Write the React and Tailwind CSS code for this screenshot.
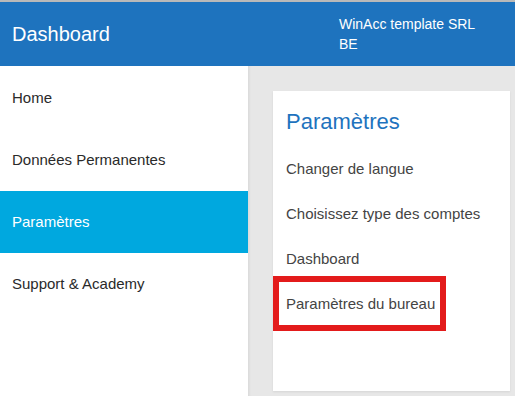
const NAV = ['Home', 'Données Permanentes', 'Paramètres', 'Support & Academy'];

const SETTINGS = ['Changer de langue', 'Choisissez type des comptes', 'Dashboard', 'Paramètres du bureau'];

export default function App() {
  return (
    <div className="flex h-[396px] w-full flex-col overflow-hidden bg-white font-['Liberation_Sans',Arial,sans-serif]">
      <div className="h-[2px] bg-[#b9b9b9]" />
      <header className="flex h-[64px] items-center bg-[#1e73be] text-white">
        <div className="w-[339px] pl-3 text-[20px]">Dashboard</div>
        <div className="text-[14px] leading-[20px]">
          WinAcc template SRL
          <br />
          BE
        </div>
      </header>

      <div className="flex flex-1">
        <nav className="w-[248px] bg-white pt-px">
          {NAV.map((item) => (
            <div
              key={item}
              className={
                item === 'Paramètres'
                  ? 'flex h-[62px] items-center bg-[#00a8df] px-3 text-[15px] text-white'
                  : 'flex h-[62px] items-center px-3 text-[15px] text-[#2a2a2a]'
              }
            >
              {item}
            </div>
          ))}
        </nav>

        <main className="flex-1 bg-[#e7e7e7] pl-[25px] pt-[25px] pr-[5px] shadow-[inset_3px_0_3px_-2px_rgba(0,0,0,0.08)]">
          <div className="h-[300px] bg-white pl-[13px] pr-[13px] pt-[16px] shadow-[0_1px_2px_rgba(0,0,0,0.08)]">
            <h1 className="mb-[10px] text-[22px] leading-[30px] text-[#1e73be]">Paramètres</h1>
            {SETTINGS.map((item, i) => (
              <div key={item} className="relative flex h-[45px] items-center text-[15px] text-[#444]">
                {item}
                {i === SETTINGS.length - 1 && (
                  <span className="absolute -left-[13px] -top-[6px] h-[55px] w-[173px] border-[6px] border-[#e31b1b]" />
                )}
              </div>
            ))}
          </div>
        </main>
      </div>
    </div>
  );
}
